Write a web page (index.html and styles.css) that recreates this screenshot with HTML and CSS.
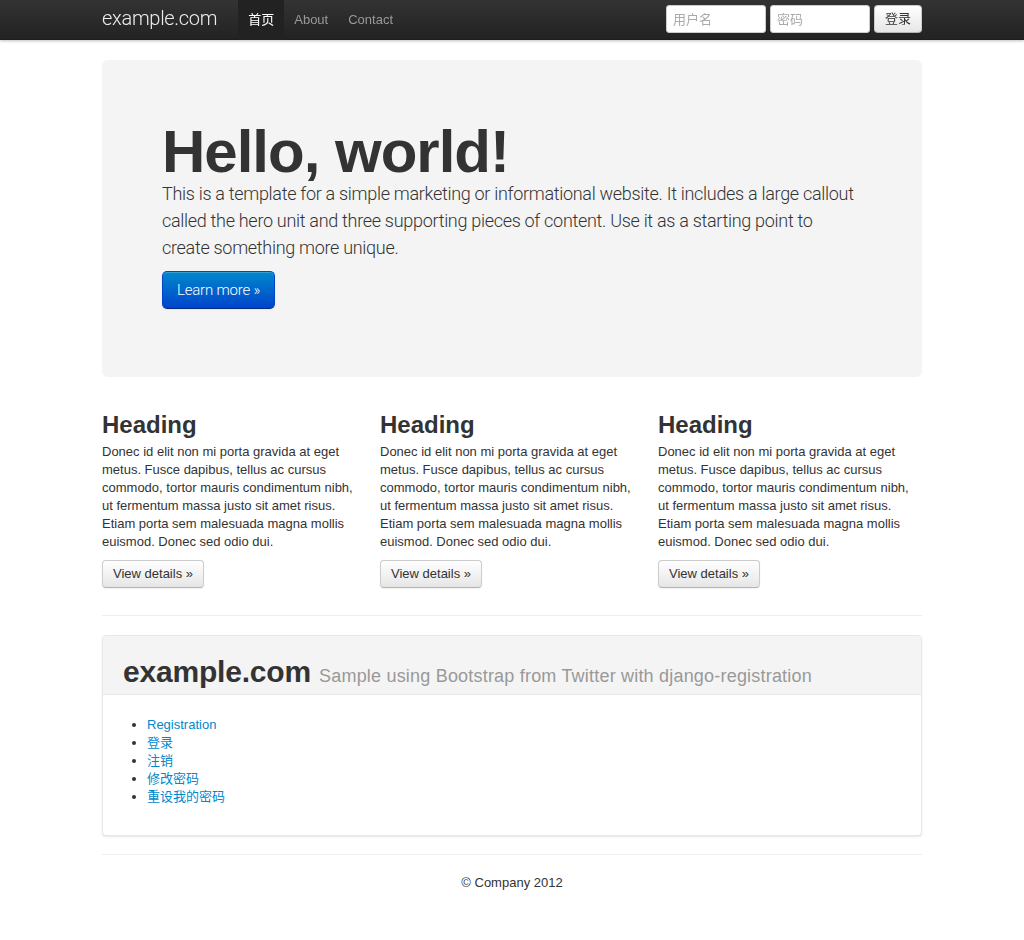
FILE: index.html
```html
<!DOCTYPE html>
<html lang="zh">
<head>
<meta charset="utf-8">
<title>example.com</title>
<link rel="stylesheet" href="styles.css">
</head>
<body>
<div class="navbar">
  <div class="container nav-inner">
    <a class="brand" href="#">example.com</a>
    <ul class="nav">
      <li class="active"><a href="#">首页</a></li>
      <li><a href="#">About</a></li>
      <li><a href="#">Contact</a></li>
    </ul>
    <form class="nav-form">
      <input type="text" placeholder="用户名">
      <input type="password" placeholder="密码">
      <button type="button" class="btn">登录</button>
    </form>
  </div>
</div>

<div class="container">
  <div class="hero">
    <h1>Hello, world!</h1>
    <p>This is a template for a simple marketing or informational website. It includes a large callout called the hero unit and three supporting pieces of content. Use it as a starting point to create something more unique.</p>
    <a class="btn btn-primary btn-large" href="#">Learn more &raquo;</a>
  </div>

  <div class="row">
    <div class="col">
      <h2>Heading</h2>
      <p>Donec id elit non mi porta gravida at eget metus. Fusce dapibus, tellus ac cursus commodo, tortor mauris condimentum nibh, ut fermentum massa justo sit amet risus. Etiam porta sem malesuada magna mollis euismod. Donec sed odio dui.</p>
      <a class="btn" href="#">View details &raquo;</a>
    </div>
    <div class="col">
      <h2>Heading</h2>
      <p>Donec id elit non mi porta gravida at eget metus. Fusce dapibus, tellus ac cursus commodo, tortor mauris condimentum nibh, ut fermentum massa justo sit amet risus. Etiam porta sem malesuada magna mollis euismod. Donec sed odio dui.</p>
      <a class="btn" href="#">View details &raquo;</a>
    </div>
    <div class="col">
      <h2>Heading</h2>
      <p>Donec id elit non mi porta gravida at eget metus. Fusce dapibus, tellus ac cursus commodo, tortor mauris condimentum nibh, ut fermentum massa justo sit amet risus. Etiam porta sem malesuada magna mollis euismod. Donec sed odio dui.</p>
      <a class="btn" href="#">View details &raquo;</a>
    </div>
  </div>

  <hr>

  <div class="panel">
    <div class="panel-header">
      <h1>example.com <small>Sample using Bootstrap from Twitter with django-registration</small></h1>
    </div>
    <div class="panel-body">
      <ul class="links">
        <li><a href="#">Registration</a></li>
        <li><a href="#">登录</a></li>
        <li><a href="#">注销</a></li>
        <li><a href="#">修改密码</a></li>
        <li><a href="#">重设我的密码</a></li>
      </ul>
    </div>
  </div>

  <hr class="foot-rule">

  <footer class="footer">
    <p>&copy; Company 2012</p>
  </footer>
</div>
</body>
</html>
```

FILE: styles.css
```css
* { box-sizing: border-box; }

body {
  margin: 0;
  padding-top: 60px;
  background: #fff;
  color: #333;
  font-family: "Liberation Sans", Arial, "Noto Sans CJK SC", sans-serif;
  font-size: 13px;
  line-height: 18px;
}

a { color: #0088cc; text-decoration: none; }

.container {
  width: 820px;
  margin: 0 auto;
}

/* navbar */
.navbar {
  position: fixed;
  top: 0; left: 0; right: 0;
  height: 40px;
  background: linear-gradient(#333333, #222222);
  box-shadow: 0 1px 3px rgba(0,0,0,.25), inset 0 -1px 0 rgba(0,0,0,.1);
  z-index: 10;
}
.nav-inner {
  display: flex;
  align-items: center;
  height: 40px;
}
.brand {
  margin-left: -20px;
  padding: 8px 21px 12px 20px;
  font-family: Roboto, "Liberation Sans", sans-serif;
  font-weight: 300;
  font-size: 20px;
  line-height: 1;
  letter-spacing: -0.3px;
  color: #eeeeee;
}
.nav {
  display: flex;
  list-style: none;
  margin: 0;
  padding: 0;
  height: 40px;
}
.nav li a {
  display: block;
  padding: 11px 10px 11px;
  line-height: 18px;
  color: #999999;
  font-size: 13px;
}
.nav li.active a {
  background: #222222;
  color: #ffffff;
}
.nav-form {
  margin-left: auto;
  margin-top: -2px;
  display: flex;
  gap: 4px;
  align-items: center;
}
.nav-form input {
  width: 100px;
  height: 28px;
  padding: 4px 6px;
  border: 1px solid #ccc;
  border-radius: 3px;
  font-family: inherit;
  font-size: 13px;
  background: #fff;
}
.nav-form input::placeholder { color: #aaa; }
.nav-form .btn {
  height: 28px;
  padding: 4px 10px;
  font-family: inherit;
}

/* buttons */
.btn {
  display: inline-block;
  padding: 4px 10px;
  font-size: 13px;
  line-height: 18px;
  color: #333;
  background: linear-gradient(#ffffff, #e6e6e6);
  border: 1px solid #cccccc;
  border-bottom-color: #b3b3b3;
  border-radius: 4px;
  box-shadow: inset 0 1px 0 rgba(255,255,255,.2), 0 1px 2px rgba(0,0,0,.05);
}
.btn-primary {
  color: #fff;
  background: linear-gradient(#0088cc, #0044cc);
  border-color: #0044cc #0044cc #002a80;
}
.btn-large {
  padding: 9px 14px;
  font-family: Roboto, "Liberation Sans", sans-serif;
  font-weight: 300;
  font-size: 15px;
  line-height: 18px;
  letter-spacing: -0.2px;
  border-radius: 5px;
}

/* hero */
.hero {
  background: #f4f4f4;
  border-radius: 6px;
  padding: 60px 60px 68px;
  margin-bottom: 30px;
}
.hero h1 {
  margin: 0;
  padding-top: 3px;
  font-size: 60px;
  line-height: 57px;
  letter-spacing: -1px;
  font-weight: bold;
  color: #333;
}
.hero p {
  margin: 0 0 10px;
  font-family: Roboto, "Liberation Sans", sans-serif;
  font-size: 18px;
  line-height: 27px;
  font-weight: 300;
  letter-spacing: -0.3px;
  color: #333;
}

/* row */
.row {
  display: grid;
  grid-template-columns: repeat(3, 258px);
  column-gap: 20px;
}
.col h2 {
  margin: 0;
  font-size: 24px;
  line-height: 36px;
  font-weight: bold;
}
.col p { margin: 0 0 9px; }

hr {
  margin: 27px 0 18px;
  border: 0;
  border-top: 1px solid #eeeeee;
  border-bottom: 1px solid #ffffff;
}

/* panel */
.panel {
  border: 1px solid #e8e8e8;
  border-radius: 4px;
  box-shadow: 0 1px 2px rgba(0,0,0,.1);
  background: #fff;
}
.panel-header {
  background: #f4f4f4;
  border-bottom: 1px solid #e8e8e8;
  padding: 18px 20px 4px;
  border-radius: 4px 4px 0 0;
}
.panel-header h1 {
  margin: 0;
  font-size: 30px;
  line-height: 36px;
  font-weight: bold;
  letter-spacing: -0.2px;
}
.panel-header small {
  font-size: 18px;
  line-height: 1;
  font-weight: normal;
  color: #999;
  letter-spacing: 0.2px;
}
.panel-body {
  padding: 21px 20px 29px 19px;
}
.links {
  margin: 0;
  padding-left: 25px;
}
.links li { line-height: 18px; }

.foot-rule { margin: 18px 0 18px; }

.footer p {
  margin: 0;
  text-align: center;
}
```
